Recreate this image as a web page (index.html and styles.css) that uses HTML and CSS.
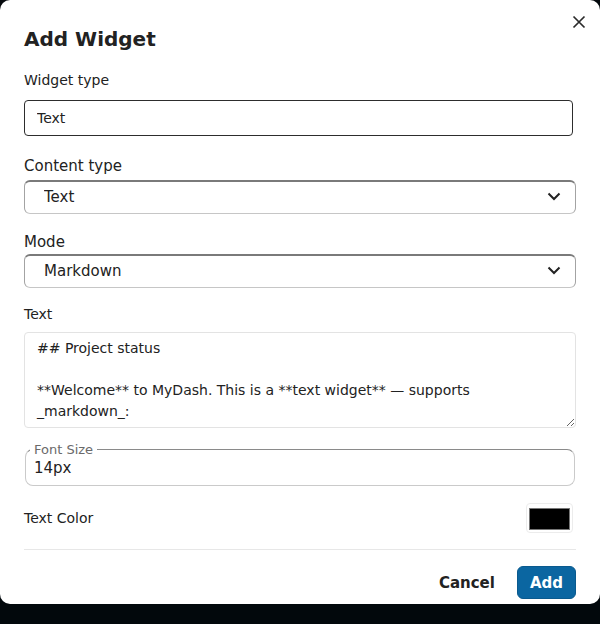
FILE: index.html
```html
<!DOCTYPE html>
<html lang="en">
<head>
    <meta charset="UTF-8">
    <meta name="viewport" content="width=device-width, initial-scale=1.0">
    <title>Add Widget</title>
    <link rel="stylesheet" href="styles.css">
</head>
<body>
    <div class="modal">
        <button class="close-button">
            <svg width="14" height="14" viewBox="0 0 14 14"><path d="M1.5 1.5 L12.5 12.5 M12.5 1.5 L1.5 12.5" stroke="#2b2b2b" stroke-width="1.7" fill="none"/></svg>
        </button>
        <h2 class="title">Add Widget</h2>

        <!-- widget type -->
        <p class="label label-first">Widget type</p>
        <input class="text-input" type="text" value="Text">

        <!-- content type -->
        <p class="label label-big label-content">Content type</p>
        <div class="select-box">
            <select class="select">
                <option>Text</option>
            </select>
            <svg class="chevron" width="14" height="10" viewBox="0 0 14 10"><path d="M1.5 2.5 L7 8 L12.5 2.5" stroke="#222" stroke-width="2" fill="none"/></svg>
        </div>

        <p class="label label-big label-mode">Mode</p>
        <div class="select-box">
            <select class="select">
                <option>Markdown</option>
            </select>
            <svg class="chevron" width="14" height="10" viewBox="0 0 14 10"><path d="M1.5 2.5 L7 8 L12.5 2.5" stroke="#222" stroke-width="2" fill="none"/></svg>
        </div>

        <!-- text body -->
        <p class="label label-text">Text</p>
        <textarea class="text-area">## Project status

**Welcome** to MyDash. This is a **text widget** — supports _markdown_:

- **bold** and *italic*
- [links](https://example.com)</textarea>

        <fieldset class="font-field">
            <legend class="font-legend">Font Size</legend>
            <input class="font-input" type="text" value="14px">
        </fieldset>

        <div class="color-row">
            <span class="color-label">Text Color</span>
            <div class="color-pick"><div class="swatch"></div></div>
        </div>

        <div class="footer">
            <button class="cancel-button">Cancel</button>
            <button class="add-button">Add</button>
        </div>
    </div>
</body>
</html>
```

FILE: styles.css
```css
body{
    margin: 0;
    background-color: #02090d;
    background-image: linear-gradient(110deg, #070b0e 0%, #0f1012 18%, #02080c 24%, #02080c 100%);
    font-family: "DejaVu Sans", sans-serif;
    color: #222;
    height: 624px;
    overflow: hidden;
}
.modal{
    position: relative;
    box-sizing: border-box;
    width: 600px;
    height: 604px;
    background-color: white;
    border-radius: 10px;
    padding: 27px 24px 0 24px;
}
.close-button{
    position: absolute;
    top: 14px;
    right: 13px;
    width: 16px;
    height: 16px;
    padding: 0;
    border: none;
    background-color: transparent;
    display: flex;
    align-items: center;
    justify-content: center;
    cursor: pointer;
}
.title{
    margin: 0;
    font-size: 20px;
    line-height: 24px;
    font-weight: bold;
}
.label{
    margin: 0;
    font-size: 14px;
    line-height: 20px;
}
.label-first{
    margin-top: 19px;
    margin-bottom: 10px;
}
.label-big{
    font-size: 15px;
}
.label-content{
    margin-top: 20px;
    margin-bottom: 4px;
}
.label-mode{
    margin-top: 18px;
    margin-bottom: 2px;
}
.label-text{
    margin-top: 16px;
    margin-bottom: 8px;
}
.text-input{
    display: block;
    box-sizing: border-box;
    width: 549px;
    height: 36px;
    margin: 0;
    padding: 0 12px;
    border: 1px solid #2d2d2d;
    border-radius: 4px;
    font-family: "DejaVu Sans", sans-serif;
    font-size: 14px;
    color: #222;
}
.select-box{
    position: relative;
}
.select{
    display: block;
    box-sizing: border-box;
    width: 552px;
    height: 34px;
    margin: 0;
    padding: 0 19px 2px 19px;
    border: 1px solid #a3a3a3;
    border-top: 2px solid #7a7a7a;
    border-bottom-color: #c6c6c6;
    border-radius: 6px;
    background-color: white;
    appearance: none;
    font-family: "DejaVu Sans", sans-serif;
    font-size: 15px;
    color: #222;
}
.chevron{
    position: absolute;
    right: 15px;
    top: 11px;
    pointer-events: none;
}
.text-area{
    display: block;
    box-sizing: border-box;
    width: 552px;
    height: 96px;
    margin: 0;
    padding: 5px 12px;
    border: 1px solid #e3e3e3;
    border-radius: 4px;
    font-family: "DejaVu Sans", sans-serif;
    font-size: 14px;
    line-height: 21px;
    color: #222;
    overflow: hidden;
}
.font-field{
    box-sizing: border-box;
    width: 550px;
    margin: 15px 0 0 1px;
    padding: 0 8px 7px 8px;
    border: 1px solid #cacaca;
    border-top-color: #8a8a8a;
    border-radius: 8px;
}
.font-legend{
    padding: 0 4px;
    margin-left: -4px;
    font-size: 13px;
    line-height: 13px;
    color: #6a6a6a;
}
.font-input{
    display: block;
    width: 100%;
    height: 20px;
    margin: 2px 0 0 0;
    padding: 0;
    border: none;
    outline: none;
    font-family: "DejaVu Sans", sans-serif;
    font-size: 15px;
    color: #222;
}
.color-row{
    display: flex;
    justify-content: space-between;
    align-items: center;
    margin-top: 17px;
    padding-right: 3px;
    padding-bottom: 16px;
    border-bottom: 1px solid #e7e7e7;
}
.color-label{
    font-size: 14px;
}
.color-pick{
    box-sizing: border-box;
    width: 47px;
    height: 30px;
    padding: 4px 2px 2px 2px;
    border: 1px solid #ececec;
    border-radius: 4px;
}
.swatch{
    box-sizing: border-box;
    width: 100%;
    height: 22px;
    background-color: black;
    border: 1px solid #777;
}
.footer{
    display: flex;
    justify-content: flex-end;
    gap: 10px;
    padding-top: 16px;
}
.cancel-button{
    height: 33px;
    padding: 0 12px;
    border: none;
    background-color: transparent;
    font-family: "DejaVu Sans", sans-serif;
    font-size: 15px;
    font-weight: bold;
    color: #222;
    cursor: pointer;
}
.add-button{
    height: 33px;
    padding: 0 12px;
    border: 1px solid #0a5a8e;
    border-radius: 6px;
    background-color: #0b66a1;
    font-family: "DejaVu Sans", sans-serif;
    font-size: 15px;
    font-weight: bold;
    color: white;
    cursor: pointer;
}
```
